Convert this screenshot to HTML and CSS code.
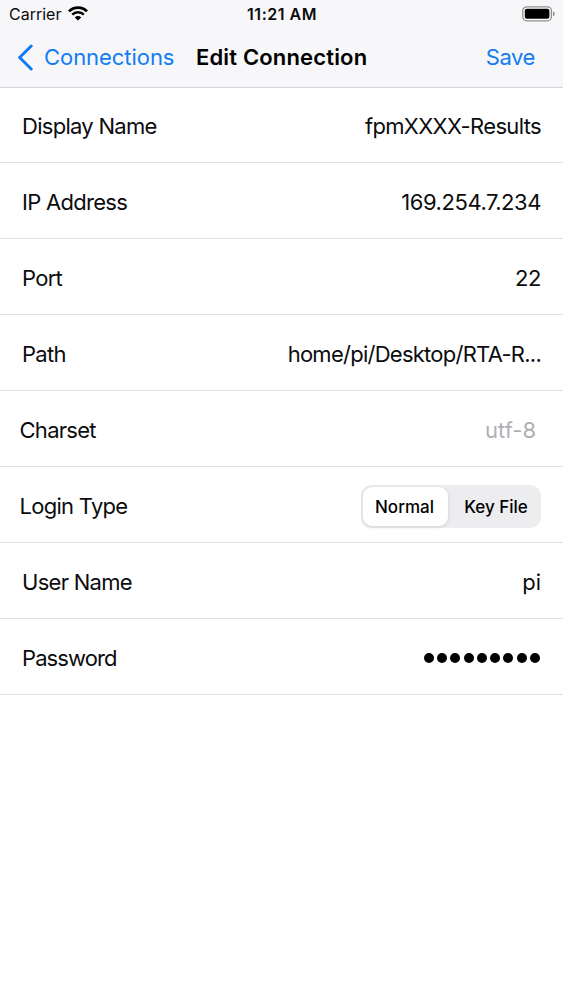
FILE: index.html
```html
<!DOCTYPE html>
<html lang="en">
<head>
    <meta charset="UTF-8">
    <meta name="viewport" content="width=device-width, initial-scale=1.0">
    <title>Edit Connection</title>
    <link rel="stylesheet" href="styles.css">
</head>
<body>
    <header class="header">
        <div class="status-bar">
            <div class="carrier">
                <span>Carrier</span>
                <svg class="wifi" width="20" height="15" viewBox="0 0 20 15">
                    <path d="M1 5.4 A12.7 12.7 0 0 1 19 5.4" fill="none" stroke="#000" stroke-width="2.7"/>
                    <path d="M4.2 8.6 A8.2 8.2 0 0 1 15.8 8.6" fill="none" stroke="#000" stroke-width="2.5"/>
                    <path d="M10 14.6 L6.8 11.4 A4.5 4.5 0 0 1 13.2 11.4 Z" fill="#000"/>
                </svg>
            </div>
            <span class="time">11:21 AM</span>
            <svg class="battery" width="34" height="16" viewBox="0 0 34 16">
                <rect x="0.8" y="0.8" width="28.6" height="14" rx="4" fill="#fff" stroke="#8e8e90" stroke-width="1.3"/>
                <rect x="2.8" y="2.8" width="24.6" height="10" rx="2" fill="#000"/>
                <path d="M31 5.3 Q32.8 6 32.8 7.8 Q32.8 9.6 31 10.3 Z" fill="#8e8e90"/>
            </svg>
        </div>
        <nav class="nav-bar">
            <a class="back">
                <svg class="chevron" width="17" height="27" viewBox="0 0 17 27">
                    <path d="M14.2 2 L2.6 13.5 L14.2 25" fill="none" stroke="#117df3" stroke-width="3" stroke-linecap="round" stroke-linejoin="round"/>
                </svg>
                <span class="back-label">Connections</span>
            </a>
            <h1>Edit Connection</h1>
            <a class="save">Save</a>
        </nav>
    </header>

    <main class="form">
        <div class="row">
            <span class="label">Display Name</span>
            <span class="value host">fpmXXXX-Results</span>
        </div>
        <div class="row">
            <span class="label">IP Address</span>
            <span class="value ip">169.254.7.234</span>
        </div>
        <div class="row">
            <span class="label">Port</span>
            <span class="value ip">22</span>
        </div>
        <div class="row">
            <span class="label">Path</span>
            <span class="value path">home/pi/Desktop/RTA-R...</span>
        </div>
        <div class="row outset">
            <span class="label">Charset</span>
            <span class="value placeholder">utf-8</span>
        </div>
        <div class="row outset">
            <span class="label">Login Type</span>
            <div class="segmented">
                <span class="segment active">Normal</span>
                <span class="segment">Key File</span>
            </div>
        </div>
        <div class="row">
            <span class="label">User Name</span>
            <span class="value">pi</span>
        </div>
        <div class="row">
            <span class="label password-label">Password</span>
            <div class="password">
                <i></i><i></i><i></i><i></i><i></i><i></i><i></i><i></i><i></i>
            </div>
        </div>
    </main>
</body>
</html>
```
FILE: styles.css
```css
* {
    box-sizing: border-box;
}
body {
    margin: 0;
    font-family: Inter, "Liberation Sans", sans-serif;
    font-size: 22px;
    line-height: 28px;
    color: #0c0c0e;
    background: #fff;
    white-space: nowrap;
}
.header {
    height: 88px;
    background: #f7f6f9;
    border-bottom: 1px solid #d6d6d8;
}
/* Status bar */
.status-bar {
    display: grid;
    grid-template-columns: 1fr auto 1fr;
    align-items: center;
    height: 28px;
    padding: 0 7px 0 9px;
    font-size: 16px;
    line-height: 20px;
}
.carrier {
    display: flex;
    align-items: center;
    gap: 7px;
}
.wifi {
    margin-top: -1px;
}
.time {
    margin-right: 1px;
    font-weight: 600;
    letter-spacing: 0.5px;
}
.battery {
    justify-self: end;
}
/* Navigation bar */
.nav-bar {
    display: grid;
    grid-template-columns: 179px auto 1fr;
    align-items: center;
    height: 58px;
    padding: 0 28px 0 17px;
}
.back,
.save {
    color: #117df3;
}
.back {
    display: flex;
    align-items: center;
    gap: 10px;
}
.back-label {
    letter-spacing: -0.05px;
}
.save {
    justify-self: end;
    letter-spacing: -0.4px;
}
h1 {
    margin: 0;
    font-size: 22px;
    font-weight: 600;
    line-height: 28px;
    letter-spacing: 0.16px;
    color: #000;
}
/* Form rows */
.row {
    display: flex;
    justify-content: space-between;
    align-items: center;
    height: 76px;
    padding: 2px 22px 0 22px;
    border-bottom: 1px solid #dfdfe0;
}
.row:first-child {
    height: 75px;
}
.row.outset {
    padding-left: 19.5px;
}
.label {
    letter-spacing: -0.72px;
}
.host {
    letter-spacing: -0.65px;
}
.ip {
    letter-spacing: -0.45px;
}
.path {
    letter-spacing: -0.74px;
}
.placeholder {
    margin-right: 5px;
    color: #b0b0b3;
}
.segmented {
    display: flex;
    width: 180px;
    height: 43px;
    margin-top: 2px;
    padding: 2px;
    border-radius: 11px;
    background: #edecef;
    font-size: 17px;
    font-weight: 500;
    color: #000;
}
.segment {
    display: flex;
    flex: 1;
    align-items: center;
    justify-content: center;
    padding-left: 5px;
}
.segment.active {
    flex: 0 0 85px;
    padding: 0 2px 0 0;
    border-radius: 9px;
    background: #fff;
    box-shadow: 0 1px 4px rgba(0, 0, 0, 0.12);
}
.password-label {
    letter-spacing: -0.9px;
}
.password {
    display: flex;
    gap: 3.3px;
    margin-right: 1px;
}
.password i {
    width: 10px;
    height: 10px;
    border-radius: 50%;
    background: #000;
}
```
